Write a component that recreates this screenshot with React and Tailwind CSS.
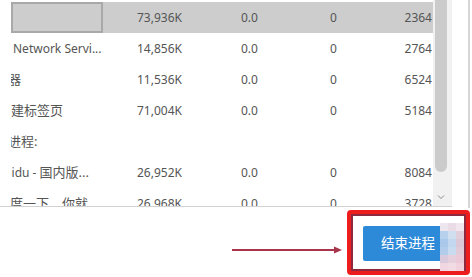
import React from 'react';

const rows = [
  { name: '', shift: 0, mem: '73,936K', cpu: '0.0', io: '0', pid: '2364', selected: true },
  { name: 'Network Servi...', shift: 1, mem: '14,856K', cpu: '0.0', io: '0', pid: '2764' },
  { name: <span className="text-[13px]">理器</span>, shift: -17, mem: '11,536K', cpu: '0.0', io: '0', pid: '6524' },
  { name: <span className="text-[13px]">新建标签页</span>, shift: -14, mem: '71,004K', cpu: '0.0', io: '0', pid: '5184' },
  { name: <span className="text-[13px]">台进程:</span>, shift: -17, group: true },
  {
    name: (
      <>
        Baidu - <span className="ml-[3px] text-[13px]">国内版...</span>
      </>
    ),
    shift: -15,
    mem: '26,952K', cpu: '0.0', io: '0', pid: '8084',
  },
  { name: <span className="text-[13px]">百度一下，你就...</span>, shift: -15, mem: '26,968K', cpu: '0.0', io: '0', pid: '3728' },
];

const mosaic = [
  ['#eee6ee', '#e9dce6', '#f1e6ee'],
  ['#b7d1ec', '#cfdff0', '#e2cfdc'],
  ['#a9c8ea', '#c3d8ef', '#dcc7d6'],
  ['#b2cdeb', '#c9dbef', '#e1cbd9'],
  ['#d8c9dc', '#e5cfdc', '#ebc9d6'],
  ['#f0d6e0', '#f3dbe4', '#f1d2dc'],
];

function Row({ r }) {
  return (
    <div
      className={
        'flex h-[31px] items-center text-[12px] text-[#555] ' +
        (r.selected ? 'bg-[#cdcdcd]' : '')
      }
    >
      <div className="relative h-full w-[126px] overflow-hidden">
        {r.selected && (
          <div className="absolute left-0 top-0 h-full w-[92px] border-2 border-[#a9a9a9]" />
        )}
        <div
          className="flex h-full items-center whitespace-nowrap pl-[1px]"
          style={{ marginLeft: r.shift }}
        >
          {r.name}
        </div>
      </div>
      {!r.group && (
        <>
          <div className="w-[104px]">{r.mem}</div>
          <div className="w-[89px]">{r.cpu}</div>
          <div className="w-[60px]">{r.io}</div>
          <div className="w-[42px] text-right">{r.pid}</div>
        </>
      )}
    </div>
  );
}

export default function App() {
  return (
    <div
      className="relative h-[277px] w-[472px] overflow-hidden bg-white"
      style={{ fontFamily: '"Noto Sans", "Noto Sans CJK SC", sans-serif' }}
    >
      {/* process list */}
      <div className="flex h-[207px]">
        <div className="flex w-[452px] border-b border-[#d2d2d2]">
          <div className="w-[11px]" />
          <div className="h-full w-[422px] overflow-hidden pt-[2px]">
            {rows.map((r, i) => (
              <Row key={i} r={r} />
            ))}
          </div>
          {/* scrollbar */}
          <div className="relative flex w-[19px] flex-col bg-[#f1f1f1]">
            <div className="ml-[2px] h-[172px] w-[12px] rounded-b-[6px] bg-[#cbcbcb]" />
            <div className="flex flex-1 items-end justify-start pb-[6px] pl-[4px]">
              <svg width="8" height="6" viewBox="0 0 8 6">
                <path d="M1 1.5 L4 4.5 L7 1.5" fill="none" stroke="#8a8a8a" strokeWidth="1" />
              </svg>
            </div>
          </div>
        </div>
        <div className="w-[16px]" />
        <div className="h-[208px] w-[2px] bg-[#d6d6d6]" />
      </div>

      {/* bottom bar */}
      <div className="flex h-[70px]">
        <div className="w-[232px]" />
        <div className="flex w-[115px] items-start pt-[38px]">
          <svg width="111" height="10" viewBox="0 0 111 10">
            <line x1="0" y1="5" x2="103" y2="5" stroke="#a8354c" strokeWidth="2" />
            <path d="M102 1.5 L110 5 L102 8.5 Z" fill="#a8354c" />
          </svg>
        </div>
        <div className="relative mt-[3px] h-[65px] w-[123px] rounded-[4px] border-4 border-[#ee1d1d]">
          <div className="h-full w-full border-2 border-[#8d2a3e] pl-[10px] pt-[10px]">
            <button className="flex h-[35px] w-[90px] items-center justify-center rounded-[2px] bg-[#2d8ad9] text-[13.5px] text-white">
              结束进程
            </button>
          </div>
          {/* mosaic over the corner */}
          <div className="absolute left-[89px] top-[9px] grid grid-cols-3">
            {mosaic.flat().map((c, i) => (
              <div key={i} className="h-[8px] w-[8px]" style={{ backgroundColor: c }} />
            ))}
          </div>
        </div>
      </div>
    </div>
  );
}
